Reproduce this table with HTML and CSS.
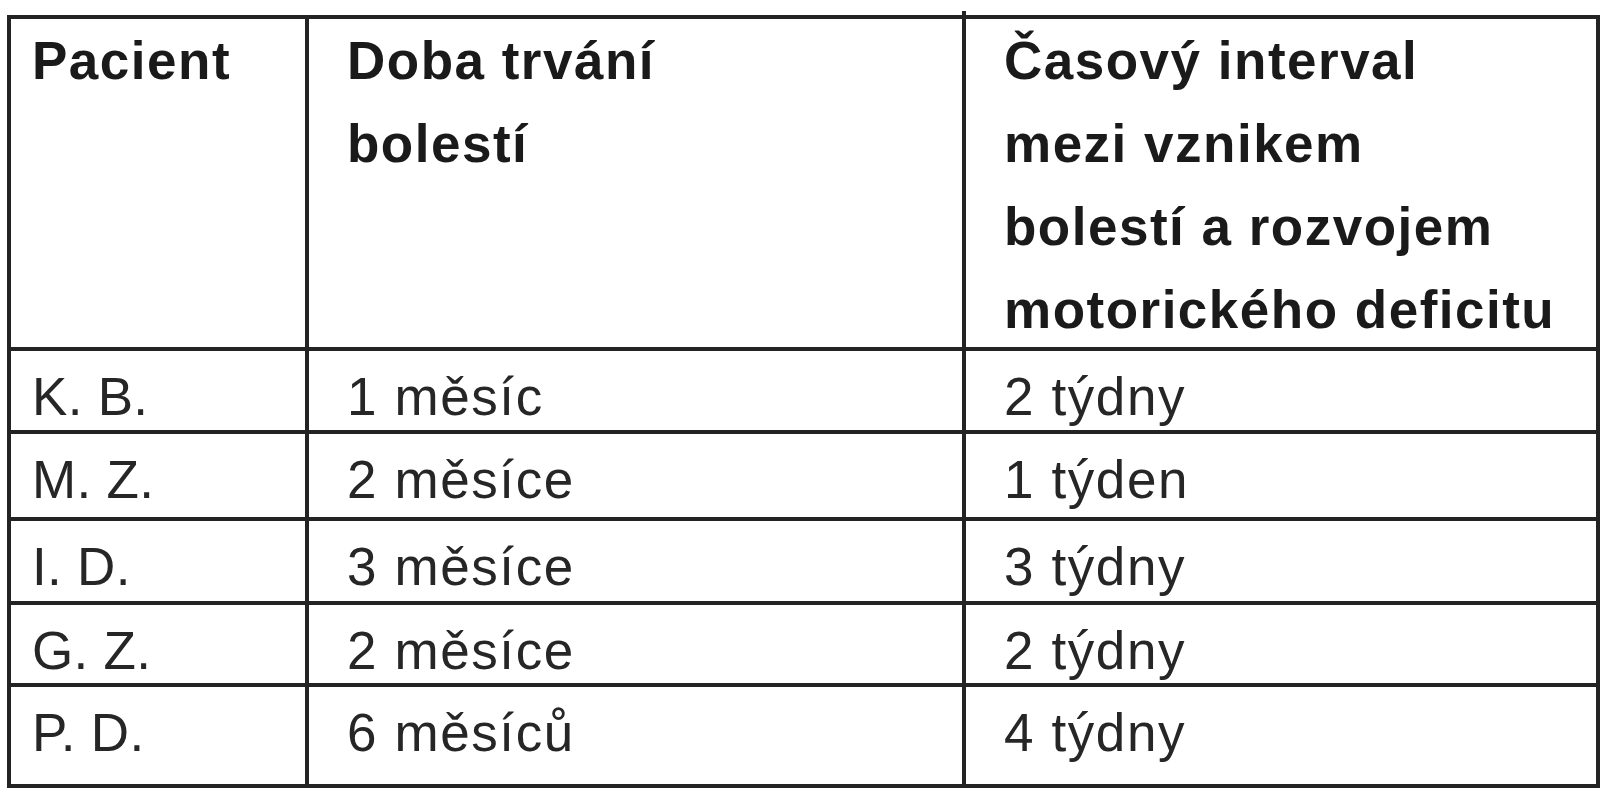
FILE: index.html
```html
<!DOCTYPE html>
<html lang="cs">
<head>
<meta charset="utf-8">
<title>Tabulka</title>
<link rel="stylesheet" href="styles.css">
</head>
<body>
<div class="table">
  <div class="cell head c1">Pacient</div>
  <div class="cell head c2">Doba trvání<br>bolestí</div>
  <div class="cell head c3 tick">Časový interval<br>mezi vznikem<br>bolestí a rozvojem<br>motorického deficitu</div>

  <div class="cell body c1">K. B.</div>
  <div class="cell body c2">1 měsíc</div>
  <div class="cell body c3">2 týdny</div>

  <div class="cell body c1">M. Z.</div>
  <div class="cell body c2">2 měsíce</div>
  <div class="cell body c3">1 týden</div>

  <div class="cell body c1">I. D.</div>
  <div class="cell body c2">3 měsíce</div>
  <div class="cell body c3">3 týdny</div>

  <div class="cell body c1">G. Z.</div>
  <div class="cell body c2">2 měsíce</div>
  <div class="cell body c3">2 týdny</div>

  <div class="cell body c1">P. D.</div>
  <div class="cell body c2">6 měsíců</div>
  <div class="cell body c3">4 týdny</div>
</div>
</body>
</html>
```

FILE: styles.css
```css
html, body {
  margin: 0;
  padding: 0;
  background: #ffffff;
}

body {
  font-family: "Liberation Sans", Arial, sans-serif;
  color: #1e1e1e;
}

.table {
  display: grid;
  grid-template-columns: 298px 657px 634px;
  grid-template-rows: 332px 83px 87px 84px 82px 101px;
  margin: 15px 0 0 7px;
  width: max-content;
  border-top: 4px solid #232323;
  border-left: 4px solid #232323;
}

.cell {
  box-sizing: border-box;
  border-right: 4px solid #232323;
  border-bottom: 4px solid #232323;
  font-size: 53px;
  white-space: nowrap;
}

.head {
  font-weight: bold;
  line-height: 83px;
  letter-spacing: 1.5px;
  color: #1a1a1a;
}

.body {
  font-weight: normal;
  line-height: 82px;
  padding-top: 5px;
  letter-spacing: 1.6px;
  color: #262626;
}

.c1 {
  padding-left: 21px;
}

.body.c1 {
  letter-spacing: 0.3px;
}

.c2,
.c3 {
  padding-left: 38px;
}

.tick {
  position: relative;
}

.tick::before {
  content: "";
  position: absolute;
  left: -4px;
  top: -8px;
  width: 4px;
  height: 4px;
  background: #232323;
}
```
